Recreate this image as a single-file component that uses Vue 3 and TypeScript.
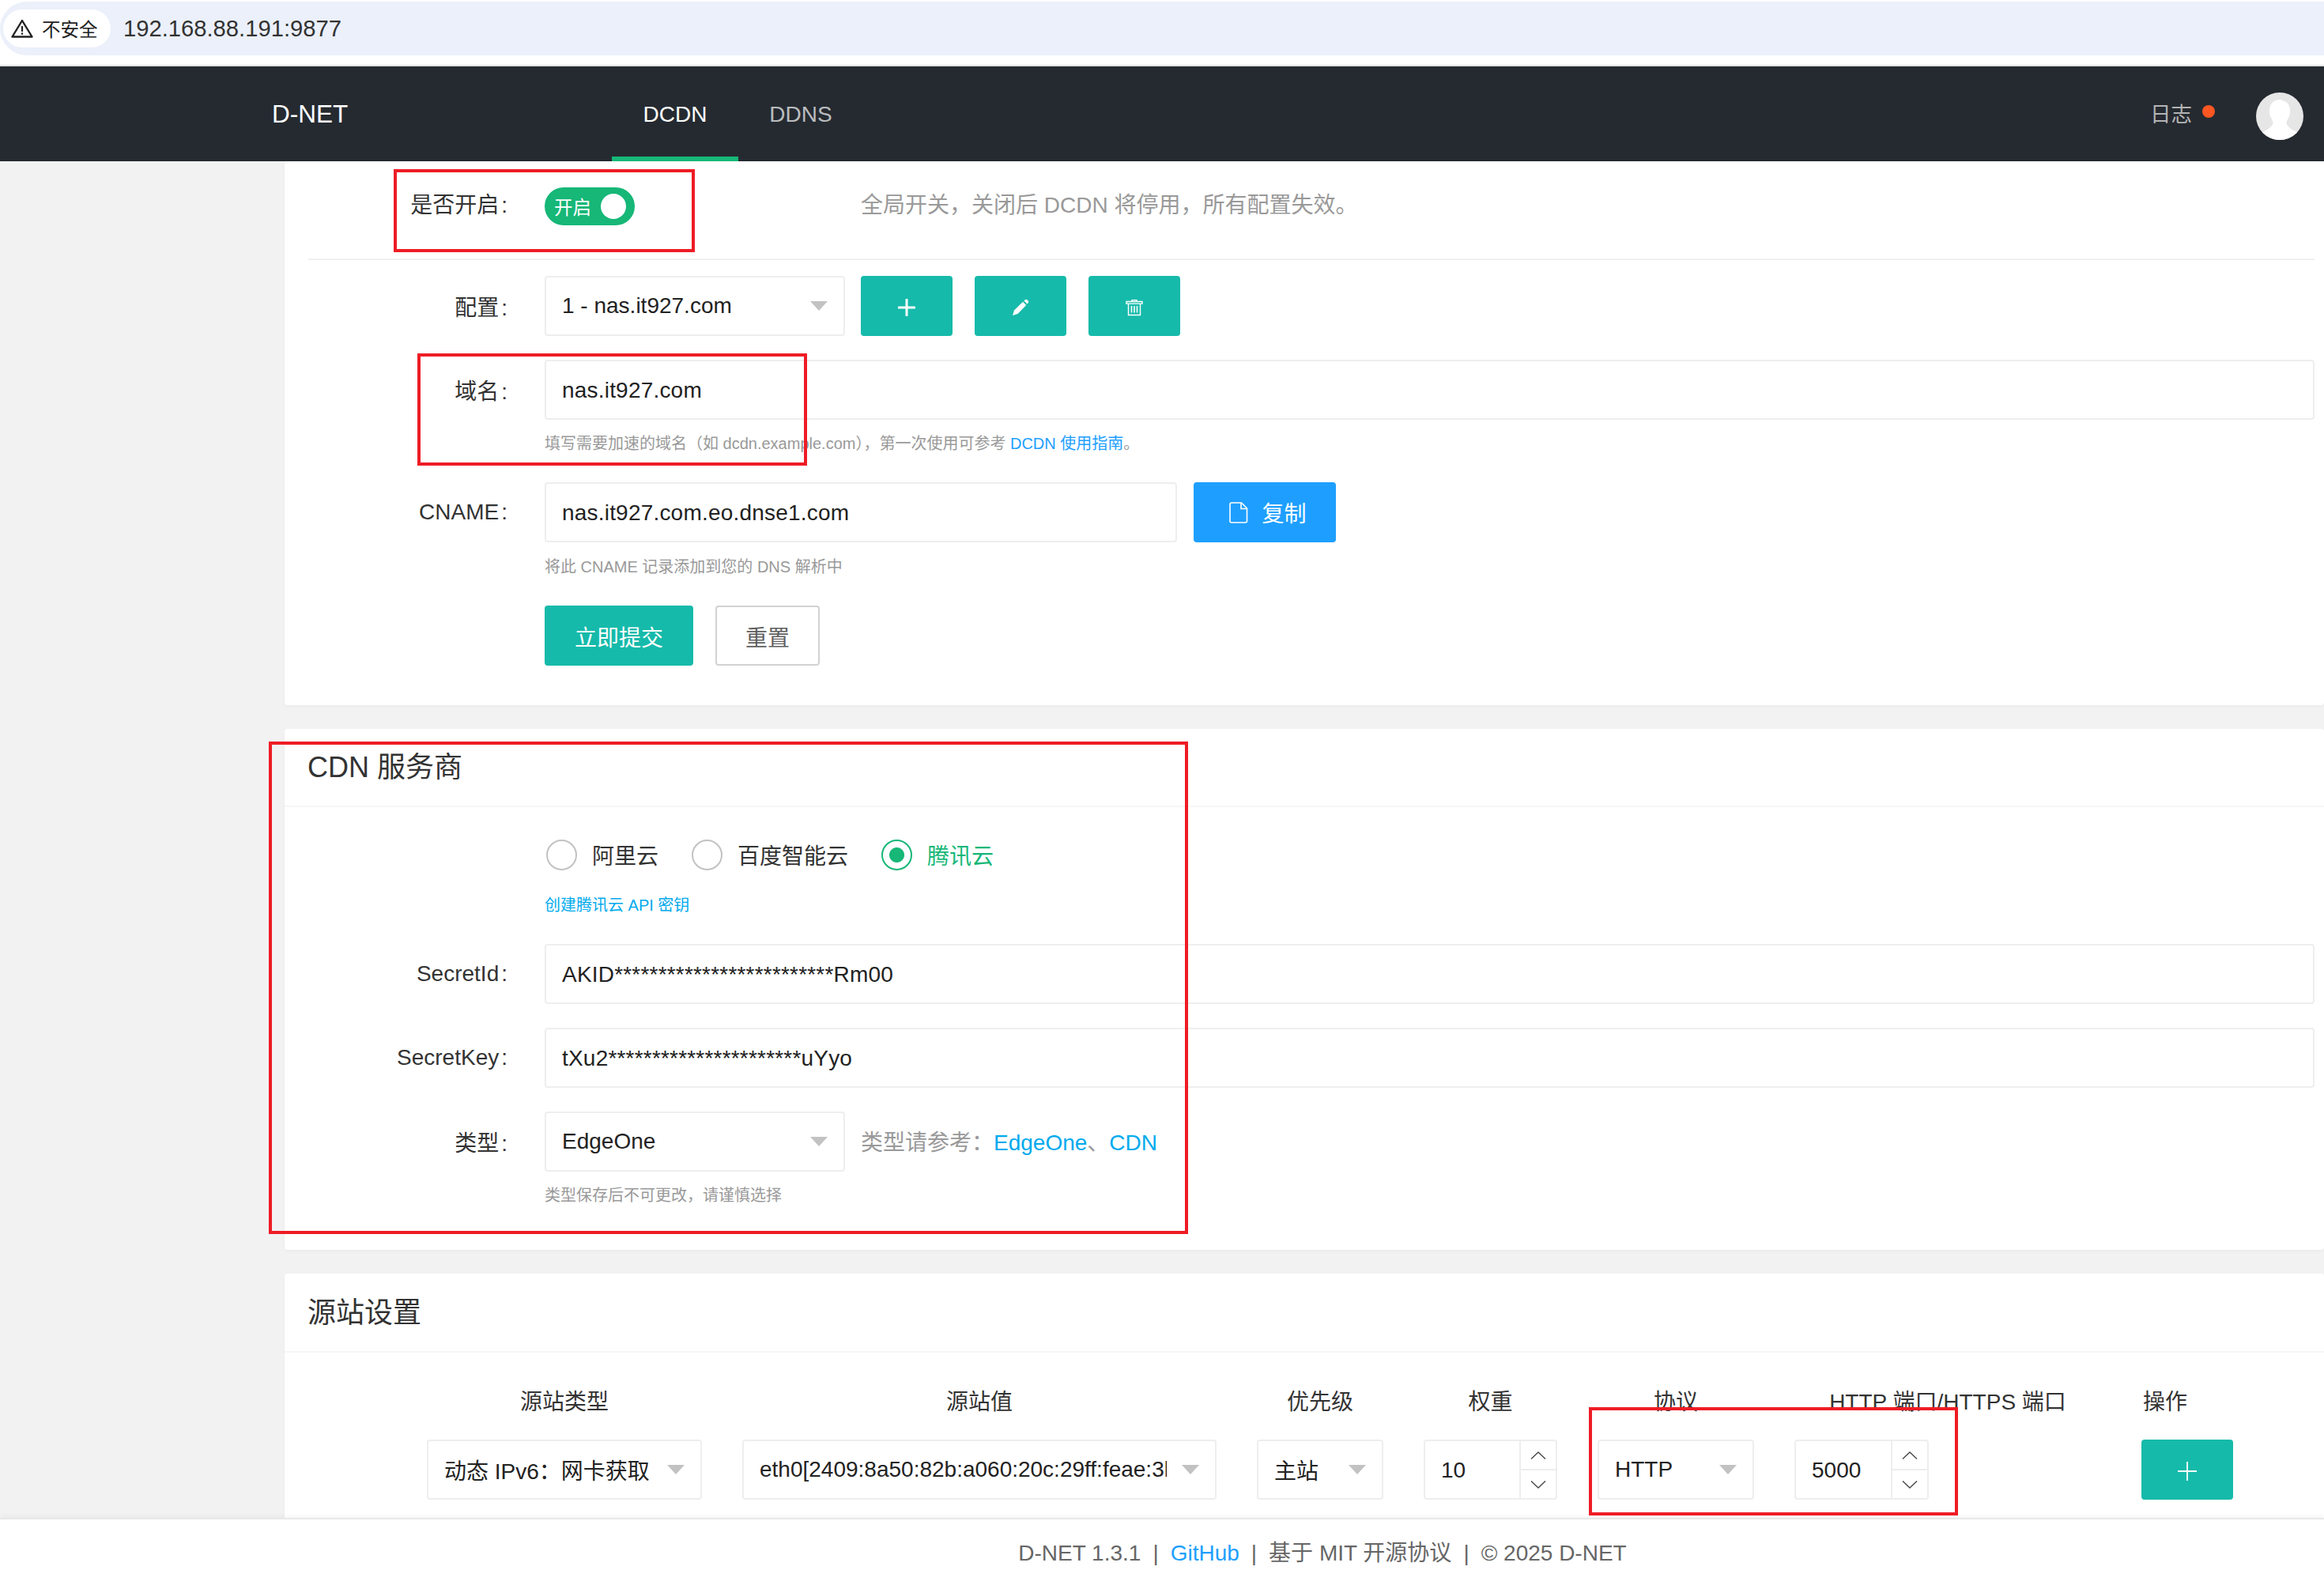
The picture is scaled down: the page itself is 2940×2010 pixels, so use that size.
<template>
  <div class="page">
    <div class="chrome">
      <div class="address">
        <div class="chip">
          <svg class="warn" viewBox="0 0 28 24" width="28" height="24">
            <path d="M14 2 L26.5 22.5 H1.5 Z" fill="none" stroke="#222" stroke-width="2.4" stroke-linejoin="round" />
            <rect x="12.9" y="9" width="2.2" height="7" fill="#222" />
            <rect x="12.9" y="17.4" width="2.2" height="2.4" fill="#222" />
          </svg>
          <span>不安全</span>
        </div>
        <span class="url">192.168.88.191:9877</span>
      </div>
    </div>

    <header class="topbar">
      <div class="logo">D-NET</div>
      <nav class="tabs">
        <a class="tab active">DCDN</a>
        <a class="tab">DDNS</a>
      </nav>
      <div class="log">日志<i class="dot"></i></div>
      <svg class="avatar" viewBox="0 0 60 60" width="60" height="60">
        <path d="M31 9c-9 0-14 6-14 14 0 5 1 8 3 11 2 3 2 6 0 8-2 3-7 6-12 8v10h44V50c-5-2-10-5-12-8-2-2-2-5 0-8 2-3 3-6 3-11 0-5-2-9-5-11z" fill="#fff" />
      </svg>
    </header>

    <main class="main">
      <section class="card first">
        <div class="row switch-row">
          <label class="label">是否开启</label>
          <div class="switch-box">
            <div class="switch"><span>开启</span><i></i></div>
          </div>
          <div class="aside">全局开关，关闭后 DCDN 将停用，所有配置失效。</div>
        </div>
        <hr class="line" />
        <div class="row">
          <label class="label">配置</label>
          <div class="select"><span>1 - nas.it927.com</span><i class="caret"></i></div>
          <button class="btn icon-btn">
            <svg viewBox="0 0 22 22" width="22" height="22"><path d="M11 1v20M1 11h20" stroke="#fff" stroke-width="3" stroke-linecap="round" /></svg>
          </button>
          <button class="btn icon-btn">
            <svg viewBox="0 0 22 22" width="22" height="22">
              <path d="M1 21 L3 14.5 L14 3.8 L18.2 8 L7.5 19 Z" fill="#fff" />
              <path d="M15.4 2.4 L17 1 Q18.2 0.2 19.4 1.2 L20.8 2.6 Q21.6 3.8 20.8 5 L19.6 6.6 Z" fill="#fff" />
            </svg>
          </button>
          <button class="btn icon-btn">
            <svg viewBox="0 0 22 22" width="22" height="22" fill="none" stroke="#fff" stroke-width="1.4">
              <path d="M1 3.5h20v2.6H1zM8 3.5V1.6h6v1.9M3.5 6.1V20.5h15V6.1" />
              <path d="M7.5 9v8.5M11 9v8.5M14.5 9v8.5" stroke-width="1.6" />
            </svg>
          </button>
        </div>
        <div class="row spaced">
          <label class="label">域名</label>
          <input class="input grow" value="nas.it927.com" readonly />
        </div>
        <div class="help help-domain">填写需要加速的域名（如 dcdn.example.com），第一次使用可参考 <a class="link-blue">DCDN 使用指南</a>。</div>
        <div class="row cname">
          <label class="label">CNAME</label>
          <input class="input cname-input" value="nas.it927.com.eo.dnse1.com" readonly />
          <button class="btn copy">
            <svg viewBox="0 0 24 27" width="24" height="27" fill="none" stroke="#fff" stroke-width="1.6">
              <path d="M3 1h12.5L22.5 8v16a2 2 0 0 1-2 2H3a2 2 0 0 1-2-2V3a2 2 0 0 1 2-2z" />
              <path d="M15 1v7.5h7.5" />
            </svg>
            <span>复制</span>
          </button>
        </div>
        <div class="help help-tight">将此 CNAME 记录添加到您的 DNS 解析中</div>
        <div class="actions">
          <button class="btn submit">立即提交</button>
          <button class="btn reset">重置</button>
        </div>
      </section>

      <section class="card">
        <div class="card-title">CDN 服务商</div>
        <div class="card-body provider">
          <div class="radios">
            <div v-for="item in providers" :key="item" class="radio" :class="{ checked: item === '腾讯云' }">
              <i></i><span>{{ item }}</span>
            </div>
          </div>
          <a class="api-link">创建腾讯云 API 密钥</a>
          <div class="row">
            <label class="label">SecretId</label>
            <input class="input grow" value="AKID*************************Rm00" readonly />
          </div>
          <div class="row spaced">
            <label class="label">SecretKey</label>
            <input class="input grow" value="tXu2**********************uYyo" readonly />
          </div>
          <div class="row spaced-type">
            <label class="label">类型</label>
            <div class="select"><span>EdgeOne</span><i class="caret"></i></div>
            <div class="aside type-aside">类型请参考：<a class="link-cyan">EdgeOne</a>、<a class="link-cyan">CDN</a></div>
          </div>
          <div class="help type-help">类型保存后不可更改，请谨慎选择</div>
        </div>
      </section>

      <section class="card last">
        <div class="card-title short">源站设置</div>
        <div class="origin">
          <div v-for="head in heads" :key="head" class="th">{{ head }}</div>
          <div class="th left">操作</div>

          <div class="select cell"><span>动态 IPv6：网卡获取</span><i class="caret"></i></div>
          <div class="select cell clip"><span>eth0[2409:8a50:82b:a060:20c:29ff:feae:3b1c]</span><i class="caret"></i></div>
          <div class="select cell"><span>主站</span><i class="caret"></i></div>
          <div class="number">
            <span>10</span>
            <div class="spin">
              <div><svg viewBox="0 0 20 10" width="20" height="10"><path d="M1 9.5 L10 1 L19 9.5" fill="none" stroke="#444" stroke-width="1.3" /></svg></div>
              <div><svg viewBox="0 0 20 10" width="20" height="10"><path d="M1 .5 L10 9 L19 .5" fill="none" stroke="#444" stroke-width="1.3" /></svg></div>
            </div>
          </div>
          <div class="select cell"><span>HTTP</span><i class="caret"></i></div>
          <div class="number port">
            <span>5000</span>
            <div class="spin">
              <div><svg viewBox="0 0 20 10" width="20" height="10"><path d="M1 9.5 L10 1 L19 9.5" fill="none" stroke="#444" stroke-width="1.3" /></svg></div>
              <div><svg viewBox="0 0 20 10" width="20" height="10"><path d="M1 .5 L10 9 L19 .5" fill="none" stroke="#444" stroke-width="1.3" /></svg></div>
            </div>
          </div>
          <button class="btn icon-btn add">
            <svg viewBox="0 0 24 24" width="24" height="24"><path d="M12 0v24M0 12h24" stroke="#fff" stroke-width="1.8" /></svg>
          </button>
        </div>
      </section>
    </main>

    <footer class="footer">
      <span>D-NET 1.3.1</span><span>|</span><a class="link-blue">GitHub</a><span>|</span><span>基于 MIT 开源协议</span><span>|</span><span>© 2025 D-NET</span>
    </footer>

    <!-- red marks drawn over the screenshot -->
    <i class="mark mark-switch"></i>
    <i class="mark mark-domain"></i>
    <i class="mark mark-provider"></i>
    <i class="mark mark-port"></i>
  </div>
</template>

<script setup lang="ts">
const providers: string[] = ["阿里云", "百度智能云", "腾讯云"];
const heads: string[] = ["源站类型", "源站值", "优先级", "权重", "协议", "HTTP 端口/HTTPS 端口"];
</script>

<style>
html,
body {
  margin: 0;
  overflow: hidden;
}
</style>

<style scoped>
.page {
  position: relative;
  display: flex;
  flex-direction: column;
  height: 100vh;
  overflow: hidden;
  font-family: "Liberation Sans", "Noto Sans CJK SC", sans-serif;
  font-size: 28px;
  color: #333;
  background: #fff;
}

.chrome {
  flex: none;
  height: 82px;
  padding-top: 2px;
  box-sizing: border-box;
  box-shadow: 0 2px 0 #e2e2e2;
  position: relative;
}
.address {
  display: flex;
  align-items: center;
  height: 68px;
  background: #ebf0fa;
  border-radius: 34px 0 0 34px;
  padding-left: 4px;
}
.chip {
  display: flex;
  align-items: center;
  gap: 11px;
  width: 136px;
  height: 48px;
  box-sizing: border-box;
  padding-left: 10px;
  background: #fff;
  border-radius: 24px;
  font-size: 23.5px;
  color: #222;
}
.url {
  margin-left: 16px;
  font-size: 29.2px;
  color: #333;
}

.topbar {
  flex: none;
  display: flex;
  align-items: center;
  height: 120px;
  margin-top: 2px;
  background: #252a31;
}
.logo {
  margin-left: 344px;
  width: 430px;
  font-size: 31.5px;
  color: #fff;
  line-height: 118px;
}
.tabs {
  display: flex;
  align-self: stretch;
}
.tab {
  width: 160px;
  box-sizing: border-box;
  padding-top: 43px;
  text-align: center;
  line-height: 36px;
  color: rgba(255, 255, 255, 0.7);
}
.tab + .tab {
  padding-right: 2px;
}
.tab.active {
  color: #fff;
  border-bottom: 6px solid #16b777;
}
.log {
  display: flex;
  align-items: center;
  margin-left: auto;
  margin-top: -4px;
  font-size: 26.5px;
  color: #b4b4b4;
}
.dot {
  width: 16px;
  height: 16px;
  margin-left: 13px;
  margin-top: -2px;
  border-radius: 50%;
  background: #ff5722;
}
.avatar {
  margin-left: 52px;
  margin-right: 26px;
  margin-top: 6px;
  border-radius: 50%;
  background: #e6e6e6;
}

.main {
  flex: 1;
  min-height: 0;
  overflow: hidden;
  padding-left: 360px;
  background: #f2f2f2;
}
.card {
  margin-bottom: 30px;
  background: #fff;
  border-radius: 4px;
  box-shadow: 0 2px 4px rgba(0, 0, 0, 0.03);
}
.card.first {
  padding: 15px 12px 50px 30px;
  border-radius: 0 0 4px 4px;
}
.card.last {
  margin-bottom: 0;
}
.card-title {
  height: 99px;
  box-sizing: border-box;
  padding-left: 29px;
  line-height: 98px;
  font-size: 36px;
  color: #333;
  border-bottom: 2px solid #f6f6f6;
}
.card-title.short {
  height: 100px;
  line-height: 100px;
}
.card-body {
  padding: 0 12px 0 30px;
}
.provider {
  height: 560px;
  box-sizing: border-box;
  padding-top: 40px;
}

.row {
  display: flex;
  align-items: center;
  min-height: 76px;
}
.row.spaced {
  margin-top: 30px;
}
.row.spaced-type {
  margin-top: 30px;
}
.label {
  flex: none;
  width: 252px;
  margin-right: 47px;
  text-align: right;
  color: #333;
}
.label::after {
  content: ":";
  margin-left: 3px;
}
.line {
  height: 2px;
  margin: 32px 0 20px;
  border: 0;
  background: #f0f0f0;
}

.switch-box {
  width: 400px;
  flex: none;
}
.switch {
  display: flex;
  align-items: center;
  justify-content: space-between;
  width: 114px;
  height: 48px;
  margin-top: 8px;
  box-sizing: border-box;
  padding: 0 11px 0 12px;
  border-radius: 24px;
  background: #16b777;
  color: #fff;
  font-size: 23.5px;
}
.switch i {
  width: 32px;
  height: 32px;
  border-radius: 50%;
  background: #fff;
}
.aside {
  color: #999;
}

.input,
.select {
  height: 76px;
  box-sizing: border-box;
  border: 2px solid #eee;
  border-radius: 4px;
  background: #fff;
  font: inherit;
  color: #222;
  outline: none;
  padding: 0 20px;
}
.input {
  padding-top: 2px;
  letter-spacing: 0.2px;
}
.grow {
  flex: 1;
  min-width: 0;
}
.select {
  position: relative;
  display: flex;
  align-items: center;
  flex: none;
  width: 380px;
  margin-right: 20px;
}
.caret {
  position: absolute;
  right: 20px;
  top: 30px;
  border-style: solid;
  border-width: 12px 11px 0;
  border-color: #c2c2c2 transparent transparent;
}

.btn {
  flex: none;
  height: 76px;
  padding: 0;
  border: 0;
  border-radius: 4px;
  background: #16baaa;
  color: #fff;
  font: inherit;
}
.icon-btn {
  display: flex;
  align-items: center;
  justify-content: center;
  width: 116px;
  margin-right: 28px;
  padding-top: 4px;
}
.help {
  margin-top: 15px;
  margin-left: 299px;
  font-size: 20px;
  line-height: 28px;
  color: #999;
}
.help-domain {
  margin-top: 16px;
}
.help-tight {
  margin-top: 17px;
}
.link-blue {
  color: #1e9fff;
}
.link-cyan {
  color: #01aaed;
}
.cname {
  margin-top: 35px;
}
.cname-input {
  width: 800px;
  margin-right: 21px;
}
.copy {
  display: flex;
  align-items: center;
  justify-content: center;
  gap: 17px;
  width: 180px;
  padding-left: 8px;
  background: #1e9fff;
}
.actions {
  display: flex;
  gap: 28px;
  margin-top: 35px;
  margin-left: 299px;
}
.submit {
  width: 188px;
  padding-top: 2px;
}
.reset {
  width: 132px;
  box-sizing: border-box;
  border: 2px solid #d2d2d2;
  background: #fff;
  color: #5f5f5f;
  padding-top: 2px;
}

.radios {
  display: flex;
  gap: 42px;
  margin-left: 301px;
  height: 40px;
}
.radio {
  display: flex;
  align-items: center;
  gap: 19px;
}
.radio i {
  display: block;
  width: 39px;
  height: 39px;
  box-sizing: border-box;
  border: 2px solid #c2c2c2;
  border-radius: 50%;
}
.radio.checked {
  color: #16b777;
}
.radio.checked i {
  border-color: #16b777;
  background: radial-gradient(circle, #16b777 0 9px, #fff 10px);
}
.api-link {
  display: block;
  margin: 30px 0 35px 299px;
  font-size: 20px;
  line-height: 28px;
  color: #01aaed;
}
.type-aside {
  margin-top: -2px;
}
.type-aside a {
  color: #01aaed;
}
.type-help {
  margin-top: 16px;
}

.origin {
  display: grid;
  grid-template-columns: 348px 600px 160px 169px 198px 388px 116px;
  column-gap: 51px;
  row-gap: 27px;
  padding: 43px 0 60px 180px;
}
.th {
  text-align: center;
  line-height: 40px;
}
.th.left {
  text-align: left;
  padding-left: 2px;
}
.select.cell {
  width: auto;
  margin-right: 0;
}
.clip span {
  overflow: hidden;
  white-space: nowrap;
  margin-right: 41px;
}
.number {
  display: flex;
  height: 76px;
  box-sizing: border-box;
  border: 2px solid #eee;
  border-radius: 4px;
  color: #222;
}
.number.port {
  width: 170px;
}
.number > span {
  flex: 1;
  padding-left: 20px;
  line-height: 74px;
}
.spin {
  display: flex;
  flex-direction: column;
  flex: none;
  width: 44px;
  border-left: 2px solid #eee;
}
.spin div {
  display: flex;
  flex: 1;
  align-items: center;
  justify-content: center;
}
.spin div + div {
  border-top: 2px solid #eee;
}
.add {
  margin-right: 0;
}

.footer {
  position: relative;
  z-index: 1;
  flex: none;
  display: flex;
  justify-content: center;
  gap: 15px;
  height: 90px;
  box-sizing: border-box;
  padding-left: 406px;
  border-top: 2px solid #e8e8e8;
  line-height: 86px;
  color: #666;
  background: #fff;
  box-shadow: 0 -3px 5px rgba(0, 0, 0, 0.03);
}

.mark {
  position: absolute;
  z-index: 2;
  box-sizing: border-box;
  border: 4px solid #ee1c25;
  pointer-events: none;
}
.mark-switch {
  left: 498px;
  top: 214px;
  width: 381px;
  height: 105px;
}
.mark-domain {
  left: 528px;
  top: 447px;
  width: 493px;
  height: 142px;
}
.mark-provider {
  left: 340px;
  top: 938px;
  width: 1163px;
  height: 623px;
}
.mark-port {
  left: 2010px;
  top: 1780px;
  width: 467px;
  height: 137px;
}
</style>
